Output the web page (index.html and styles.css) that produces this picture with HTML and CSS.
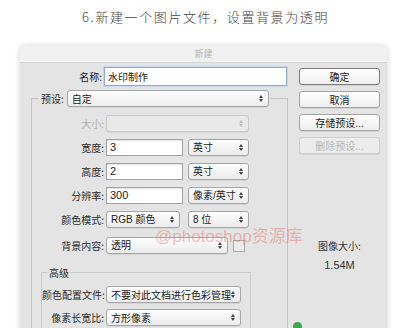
FILE: index.html
```html
<!DOCTYPE html>
<html lang="zh">
<head>
  <meta charset="UTF-8" />
  <title>新建</title>
  <link rel="stylesheet" href="styles.css">
</head>
<body>
  <div class="heading">6.新建一个图片文件，设置背景为透明</div>
  <div class="dialog">
    <div class="titlebar">新建</div>
    <div class="dialog-body">
      <div class="form">
        <div class="name-row">
          <span class="name-label">名称:</span>
          <div class="input name-input">水印制作</div>
        </div>
        <fieldset class="group">
          <legend class="preset">
            <span class="lbl">预设:</span>
            <div class="select preset-select">自定<i class="arrows"></i></div>
          </legend>
          <div class="row">
            <span class="label dim">大小:</span>
            <div class="select size-select disabled"><i class="arrows"></i></div>
          </div>
          <div class="row">
            <span class="label">宽度:</span>
            <div class="input num">3</div>
            <div class="select unit">英寸<i class="arrows"></i></div>
          </div>
          <div class="row">
            <span class="label">高度:</span>
            <div class="input num">2</div>
            <div class="select unit">英寸<i class="arrows"></i></div>
          </div>
          <div class="row">
            <span class="label">分辨率:</span>
            <div class="input num">300</div>
            <div class="select unit">像素/英寸<i class="arrows"></i></div>
          </div>
          <div class="row">
            <span class="label">颜色模式:</span>
            <div class="select mode">RGB 颜色<i class="arrows"></i></div>
            <div class="select depth">8 位<i class="arrows"></i></div>
          </div>
          <div class="row bg-row">
            <span class="label">背景内容:</span>
            <div class="select bg-select">透明<i class="arrows"></i></div>
            <span class="swatch"></span>
          </div>
          <fieldset class="advanced">
            <legend class="adv-title">高级</legend>
            <div class="row">
              <span class="label adv-label">颜色配置文件:</span>
              <div class="select profile">不要对此文档进行色彩管理<i class="arrows"></i></div>
            </div>
            <div class="row">
              <span class="label adv-label">像素长宽比:</span>
              <div class="select profile">方形像素<i class="arrows"></i></div>
            </div>
          </fieldset>
        </fieldset>
      </div>
      <div class="side">
        <button class="btn default">确定</button>
        <button class="btn">取消</button>
        <button class="btn">存储预设...</button>
        <button class="btn disabled">删除预设...</button>
        <div class="size-title">图像大小:</div>
        <div class="size-value">1.54M</div>
        <span class="dot"></span>
      </div>
    </div>
    <div class="watermark">@photoshop资源库</div>
  </div>
</body>
</html>
```

FILE: styles.css
```css
body {
  margin: 0;
  width: 411px;
  height: 328px;
  overflow: hidden;
  background: #fff;
  font-family: "Liberation Sans", "Noto Sans CJK SC", sans-serif;
  color: #222;
}
.heading {
  height: 34px;
  line-height: 34px;
  text-align: center;
  font-family: "Noto Sans CJK SC", sans-serif;
  font-weight: 300;
  font-size: 13px;
  letter-spacing: 1.6px;
  color: #444;
}
.dialog {
  position: relative;
  margin: 12px 24px 0 20px;
  height: 400px;
  background: #e4e4e4;
  border-radius: 4px 4px 0 0;
  box-shadow: 0 0 6px rgba(0,0,0,0.18);
}
.titlebar {
  height: 16px;
  line-height: 16px;
  text-align: center;
  font-family: "Noto Sans CJK SC", sans-serif;
  font-size: 9px;
  color: #b0b0b0;
  background: #f1f1f1;
  border-radius: 4px 4px 0 0;
  border-bottom: 1px solid #d6d6d6;
}
.dialog-body {
  display: flex;
  padding-top: 4px;
}
.form {
  width: 268px;
}
.name-row {
  display: flex;
  align-items: center;
  height: 19px;
}
.name-label {
  width: 82px;
  padding-right: 2px;
  text-align: right;
  font-size: 10px;
  font-family: "Noto Sans CJK SC", sans-serif;
  white-space: nowrap;
}
.lbl, .label, .adv-title, .size-title {
  font-family: "Noto Sans CJK SC", sans-serif;
  font-size: 10px;
  color: #2a2a2a;
  white-space: nowrap;
}
.input {
  box-sizing: border-box;
  height: 17px;
  line-height: 15px;
  padding-left: 3px;
  background: #fff;
  border: 1px solid #a2a2a2;
  box-shadow: inset 0 1px 1px rgba(0,0,0,0.12);
  font-size: 11px;
}
.name-input {
  width: 183px;
  height: 19px;
  line-height: 17px;
  font-size: 10px;
  border-color: #8eaed3;
  box-shadow: 0 0 0 1px #c6d8ee;
  font-family: "Noto Sans CJK SC", sans-serif;
}
.select {
  box-sizing: border-box;
  position: relative;
  height: 17px;
  line-height: 15px;
  padding-left: 4px;
  background: linear-gradient(#fefefe, #ececec);
  border: 1px solid #a6a6a6;
  border-radius: 3px;
  box-shadow: 0 1px 0 rgba(0,0,0,0.06);
  font-size: 10px;
  font-family: "Liberation Sans", "Noto Sans CJK SC", sans-serif;
  white-space: nowrap;
}
.arrows {
  position: absolute;
  right: 5px;
  top: 4px;
  width: 0;
  height: 0;
  border-left: 2px solid transparent;
  border-right: 2px solid transparent;
  border-bottom: 3px solid #444;
}
.arrows::after {
  content: "";
  position: absolute;
  left: -2px;
  top: 4px;
  border-left: 2px solid transparent;
  border-right: 2px solid transparent;
  border-top: 3px solid #444;
}
.disabled .arrows, .disabled .arrows::after {
  border-bottom-color: #bbb;
  border-top-color: #bbb;
}
.select.disabled {
  background: #e9e9e9;
  border-color: #cacaca;
}
.group {
  margin: 4px 0 0 11px;
  padding: 8px 0 0 0;
  border: 1px solid #c4c4c4;
  border-bottom: none;
  min-width: 0;
}
.preset {
  display: flex;
  align-items: center;
  margin-left: 7px;
  padding: 0 2px;
}
.preset .lbl {
  margin-right: 3px;
}
.preset-select {
  width: 202px;
  font-family: "Noto Sans CJK SC", sans-serif;
}
.row {
  display: flex;
  align-items: center;
  height: 17px;
  margin-bottom: 7px;
}
.label {
  width: 72px;
  margin-right: 2px;
  text-align: right;
}
.label.dim {
  color: #b0b0b0;
}
.size-select {
  width: 143px;
}
.num {
  width: 77px;
}
.unit {
  width: 61px;
  margin-left: 5px;
}
.mode {
  width: 74px;
}
.depth {
  width: 61px;
  margin-left: 8px;
}
.bg-row {
  margin-top: 9px;
}
.bg-select {
  width: 122px;
}
.swatch {
  width: 10px;
  height: 10px;
  margin-left: 5px;
  border: 1px solid #a8a8a8;
  background: #ececec;
}
.advanced {
  margin: 11px 0 0 9px;
  width: 208px;
  padding: 6px 0 0 0;
  border: 1px solid #cacaca;
  border-bottom: none;
  min-width: 0;
}
.adv-title {
  margin-left: 5px;
  padding: 0 2px;
}
.adv-label {
  width: 62px;
}
.profile {
  width: 135px;
  font-family: "Noto Sans CJK SC", sans-serif;
}
.advanced .row {
  margin-bottom: 6px;
}
.side {
  display: flex;
  flex-direction: column;
  align-items: center;
  width: 81px;
  margin-left: 11px;
  padding-top: 1px;
}
.btn {
  width: 81px;
  height: 17px;
  margin: 0 0 6px 0;
  padding: 0;
  background: linear-gradient(#ffffff, #efefef);
  border: 1px solid #a4a4a4;
  border-radius: 3px;
  box-shadow: 0 1px 0 rgba(0,0,0,0.08);
  font-family: "Noto Sans CJK SC", sans-serif;
  font-size: 10px;
  line-height: 15px;
  color: #222;
}
.btn.default {
  border-color: #7c7c7c;
}
.btn.disabled {
  color: #b8b8b8;
  border-color: #cfcfcf;
  background: #ececec;
}
.size-title {
  margin-top: 79px;
  line-height: 14px;
  color: #333;
}
.size-value {
  margin-top: 5px;
  line-height: 14px;
  font-size: 11px;
  color: #333;
}
.dot {
  align-self: flex-start;
  margin: 50px 0 0 -6px;
  width: 9px;
  height: 9px;
  border-radius: 50%;
  background: #3aa94a;
}
.watermark {
  position: absolute;
  left: 135px;
  top: 176px;
  font-family: "Liberation Sans", "Noto Sans CJK SC", sans-serif;
  font-size: 17px;
  color: rgba(228, 110, 110, 0.45);
  pointer-events: none;
}
```
